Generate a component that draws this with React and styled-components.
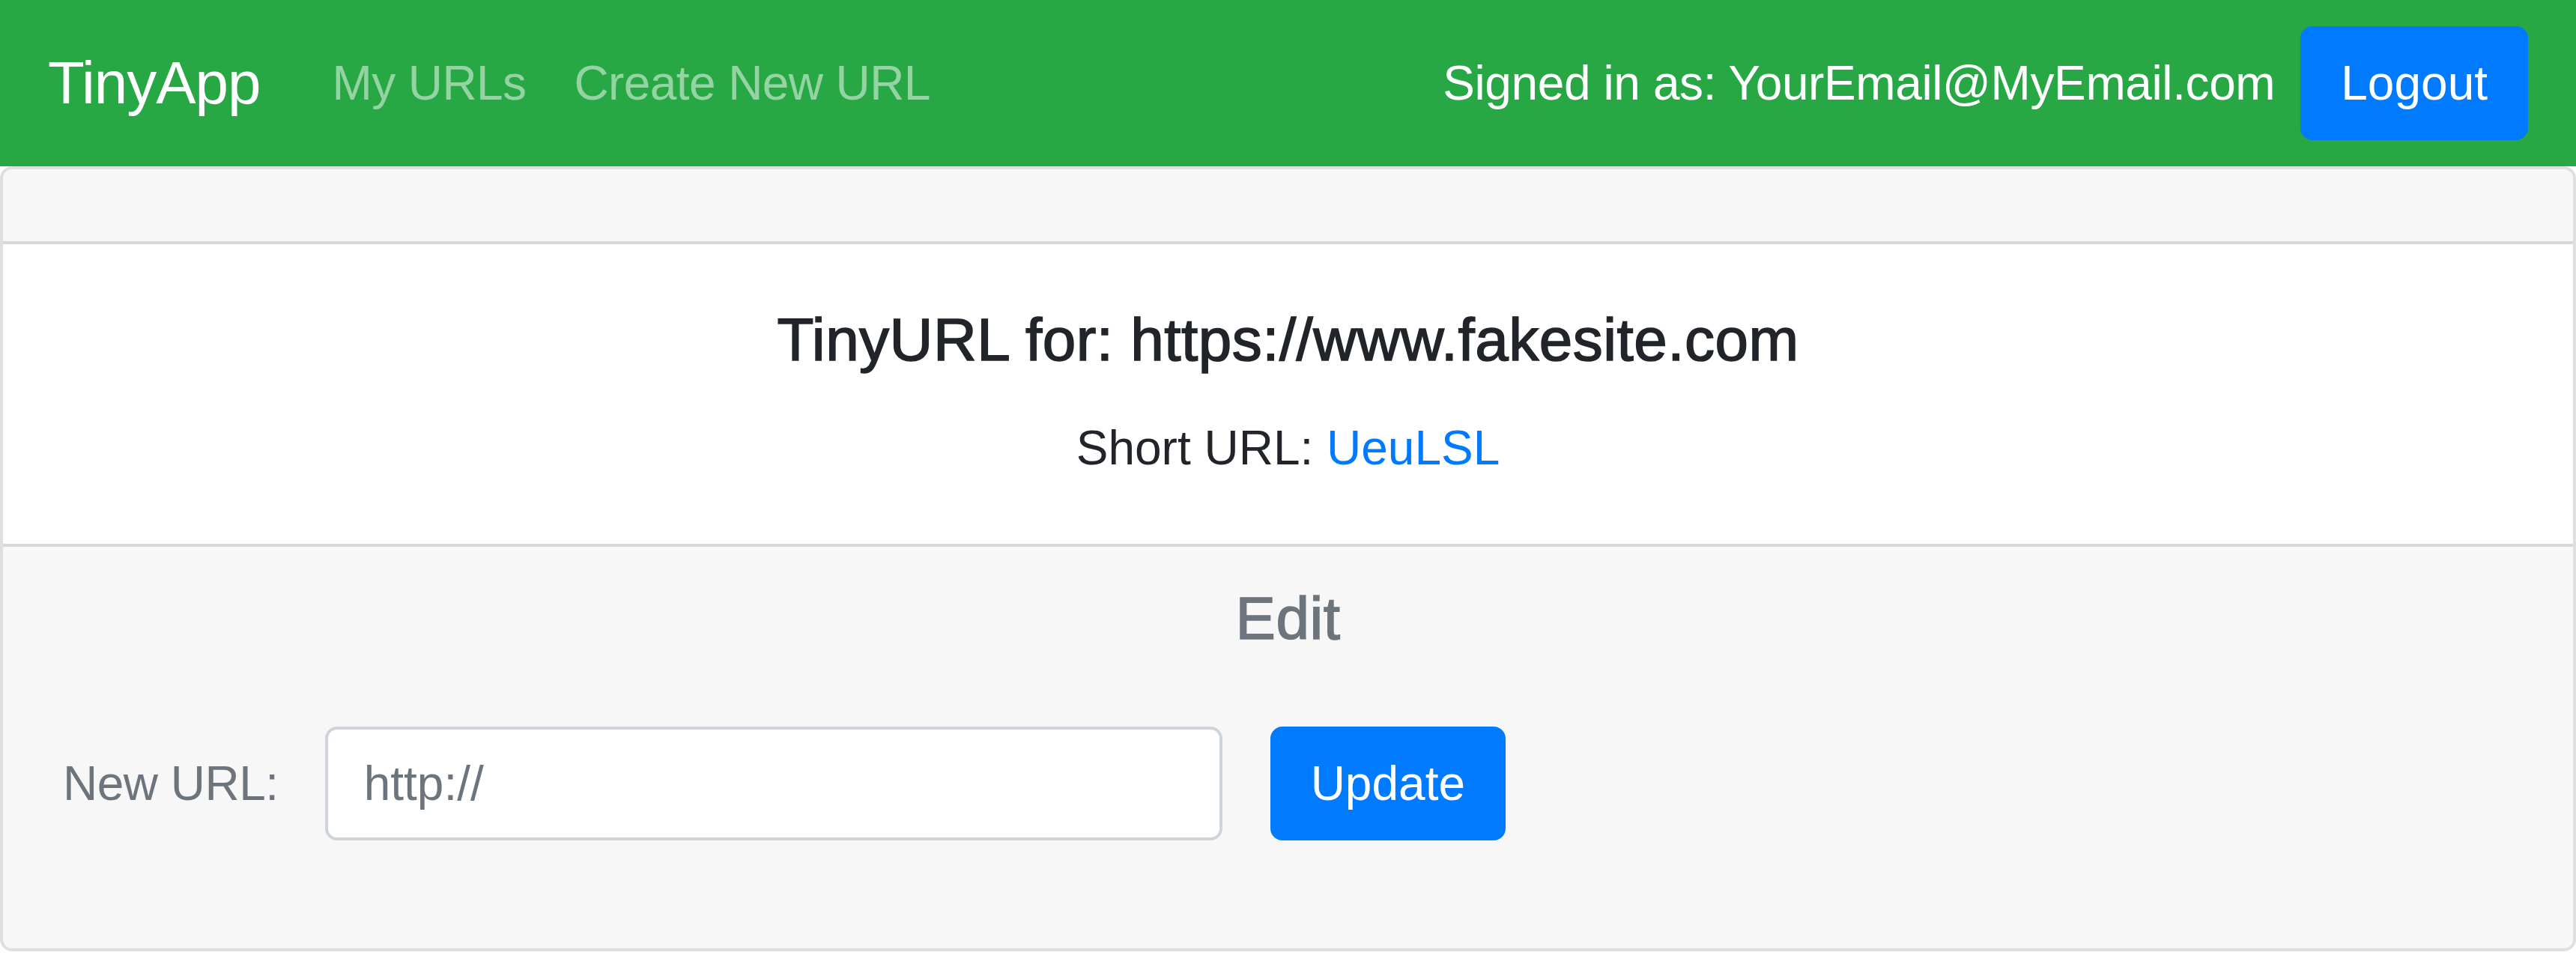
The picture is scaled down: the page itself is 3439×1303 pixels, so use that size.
import styled, { createGlobalStyle } from "styled-components";

const GlobalStyle = createGlobalStyle`
  html, body {
    margin: 0;
    padding: 0;
    background: #ffffff;
  }
  body {
    font-family: "Liberation Sans", Arial, sans-serif;
    color: #212529;
  }
  * {
    box-sizing: border-box;
  }
`;

const Navbar = styled.nav`
  display: flex;
  align-items: center;
  justify-content: space-between;
  height: 222px;
  padding: 32px 64px;
  background: #28a745;
`;

const NavLeft = styled.div`
  display: flex;
  align-items: center;
`;

const Brand = styled.a`
  font-size: 80px;
  line-height: 120px;
  padding: 20px 0;
  margin-right: 64px;
  color: #ffffff;
  text-decoration: none;
  letter-spacing: -1px;
`;

const NavLink = styled.a`
  padding: 0 32px;
  font-size: 64px;
  line-height: 96px;
  color: rgba(255, 255, 255, 0.5);
  text-decoration: none;
  letter-spacing: -0.6px;
`;

const NavRight = styled.div`
  display: flex;
  align-items: center;
`;

const SignedIn = styled.span`
  font-size: 64px;
  line-height: 96px;
  color: #ffffff;
  margin-right: 34px;
  letter-spacing: -0.4px;
`;

const Button = styled.button`
  font-family: inherit;
  font-size: 64px;
  line-height: 96px;
  padding: 24px 50px;
  margin-left: ${(props) => props.$offset || 0}px;
  color: #ffffff;
  background: #007bff;
  border: 4px solid #007bff;
  border-radius: 16px;
  cursor: pointer;
`;

const Card = styled.section`
  width: 100%;
  border: 4px solid rgba(0, 0, 0, 0.125);
  border-radius: 16px;
  overflow: hidden;
`;

const CardHeader = styled.div`
  padding: 48px 80px;
  background: rgba(0, 0, 0, 0.03);
  border-bottom: 4px solid rgba(0, 0, 0, 0.125);
`;

const CardBody = styled.div`
  padding: 80px;
  text-align: center;
`;

const CardTitle = styled.h5`
  margin: 0 0 ${(props) => props.$gap}px;
  font-size: 80px;
  line-height: 96px;
  font-weight: 500;
  letter-spacing: 0.5px;
  color: ${(props) => props.$color || "#212529"};
  -webkit-text-stroke: 1.6px currentColor;
  text-align: center;
`;

const CardText = styled.p`
  margin: 0;
  font-size: 64px;
  line-height: 96px;
`;

const Link = styled.a`
  color: #007bff;
  text-decoration: none;
`;

const CardFooter = styled.div`
  padding: 48px 80px;
  background: rgba(0, 0, 0, 0.03);
  border-top: 4px solid rgba(0, 0, 0, 0.125);
`;

const FormRow = styled.form`
  display: flex;
  align-items: center;
  margin-bottom: 96px;
`;

const Label = styled.label`
  font-size: 64px;
  line-height: 96px;
  color: #6c757d;
  margin-right: 62px;
  letter-spacing: -0.5px;
`;

const Input = styled.input`
  width: 1198px;
  height: 152px;
  padding: 24px 48px;
  font-family: inherit;
  font-size: 64px;
  line-height: 96px;
  color: #495057;
  background: #ffffff;
  border: 4px solid #ced4da;
  border-radius: 16px;
  outline: none;

  &::placeholder {
    color: #6c757d;
    opacity: 1;
  }
`;

export default function App() {
  return (
    <>
      <GlobalStyle />
      <Navbar>
        <NavLeft>
          <Brand href="#">TinyApp</Brand>
          <NavLink href="#">My URLs</NavLink>
          <NavLink href="#">Create New URL</NavLink>
        </NavLeft>
        <NavRight>
          <SignedIn>Signed in as: YourEmail@MyEmail.com</SignedIn>
          <Button type="button">Logout</Button>
        </NavRight>
      </Navbar>

      <Card>
        <CardHeader />
        <CardBody>
          <CardTitle $gap={48}>TinyURL for: https://www.fakesite.com</CardTitle>
          <CardText>
            Short URL: <Link href="#">UeuLSL</Link>
          </CardText>
        </CardBody>
        <CardFooter>
          <CardTitle $gap={96} $color="#6c757d">
            Edit
          </CardTitle>
          <FormRow onSubmit={(e) => e.preventDefault()}>
            <Label htmlFor="longURL">New URL:</Label>
            <Input id="longURL" type="text" placeholder="http://" />
            <Button type="submit" $offset={64}>
              Update
            </Button>
          </FormRow>
        </CardFooter>
      </Card>
    </>
  );
}
